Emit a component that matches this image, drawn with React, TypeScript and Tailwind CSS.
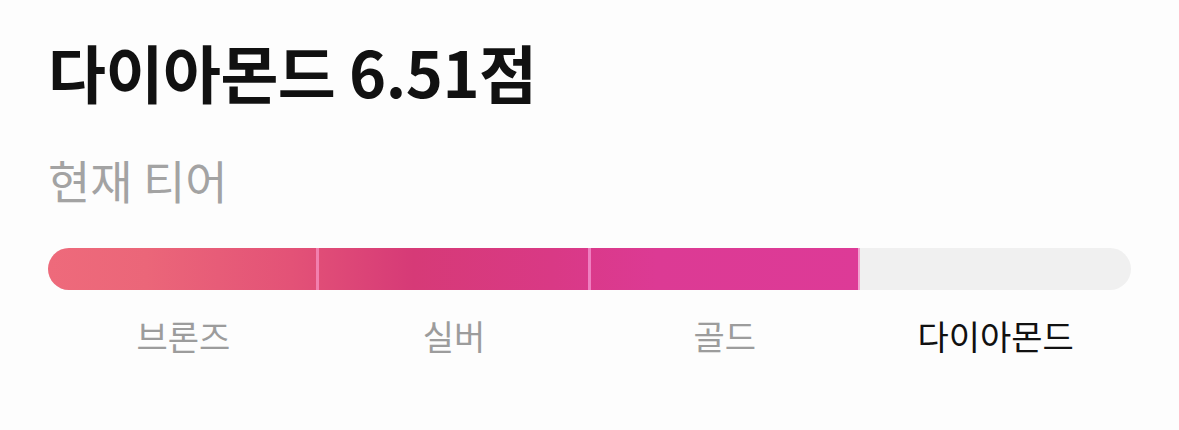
const tiers = ["브론즈", "실버", "골드", "다이아몬드"];

export default function App() {
  return (
    <div className="w-[1179px] h-[430px] bg-[#fdfdfd] px-[48px] pt-[31px] font-['Noto_Sans_CJK_KR','Noto_Sans',sans-serif]">
      {/* Header */}
      <h1 className="text-[63px] leading-[80px] font-bold text-[#111111] tracking-[-0.5px]">다이아몬드 6.51점</h1>
      <p className="mt-[43px] text-[46px] leading-[50px] text-[#a3a3a3]">현재 티어</p>
      {/* Tier bar */}
      <div className="mt-[44px] w-[1083px] h-[42px] flex rounded-full overflow-hidden bg-[#f0f0f0]">
        <div className="w-[812px] flex bg-[linear-gradient(90deg,#ee6a7b_0%,#eb6679_12%,#e35277_30%,#d63a77_45%,#d93985_62%,#dc3a94_75%,#dd3a97_100%)]">
          <div className="w-[268px]" />
          <div className="w-[272px] border-l-[3px] border-[#f27fae]" />
          <div className="w-[272px] border-l-[3px] border-[#ef7ec0] border-r-[2px] border-r-[#f2a3d2]" />
        </div>
      </div>
      {/* Labels */}
      <div className="w-[1083px] grid grid-cols-4 mt-[24px]">
        {tiers.map((t, i) => (
          <div
            key={t}
            className={
              i === 3
                ? "text-center text-[34px] leading-[44px] text-[#111111]"
                : "text-center text-[34px] leading-[44px] text-[#9c9c9c]"
            }
          >
            {t}
          </div>
        ))}
      </div>
    </div>
  );
}
